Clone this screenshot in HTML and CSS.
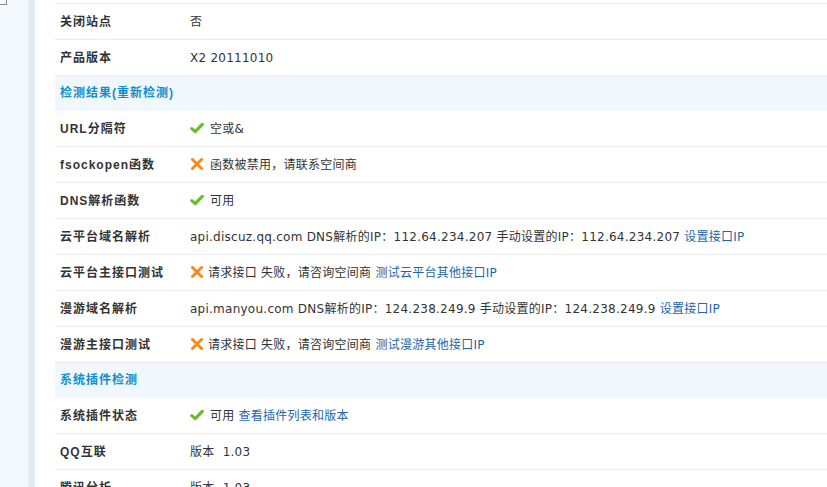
FILE: index.html
```html
<!DOCTYPE html>
<html lang="zh-CN">
<head>
<meta charset="utf-8">
<title>检测结果</title>
<link rel="stylesheet" href="styles.css">
</head>
<body>
<div class="frame">
  <aside class="side"><span class="tree-corner"></span></aside>
  <div class="side-edge"></div>
  <main class="main">
    <div class="cut"></div>
    <div class="row"><div class="label">关闭站点</div><div class="value">否</div></div>
    <div class="row"><div class="label">产品版本</div><div class="value">X2 20111010</div></div>
    <div class="row head"><div class="label">检测结果(重新检测)</div></div>
    <div class="row"><div class="label">URL分隔符</div><div class="value"><svg class="ico" viewBox="0 0 14 12"><path class="ok" d="M1.8 6.6 L5.2 9.6 L12.3 2.4"/></svg>空或&amp;</div></div>
    <div class="row"><div class="label">fsockopen函数</div><div class="value"><svg class="ico" viewBox="0 0 14 12"><path class="no" d="M2.5 1.5 L11.5 10.5 M11.5 1.5 L2.5 10.5"/></svg>函数被禁用，请联系空间商</div></div>
    <div class="row"><div class="label">DNS解析函数</div><div class="value"><svg class="ico" viewBox="0 0 14 12"><path class="ok" d="M1.8 6.6 L5.2 9.6 L12.3 2.4"/></svg>可用</div></div>
    <div class="row"><div class="label">云平台域名解析</div><div class="value">api.discuz.qq.com DNS解析的IP：112.64.234.207 手动设置的IP：112.64.234.207 <a href="#">设置接口IP</a></div></div>
    <div class="row"><div class="label">云平台主接口测试</div><div class="value"><svg class="ico tight" viewBox="0 0 14 12"><path class="no" d="M2.5 1.5 L11.5 10.5 M11.5 1.5 L2.5 10.5"/></svg>请求接口 失败，请咨询空间商 <a href="#">测试云平台其他接口IP</a></div></div>
    <div class="row"><div class="label">漫游域名解析</div><div class="value">api.manyou.com DNS解析的IP：124.238.249.9 手动设置的IP：124.238.249.9 <a href="#">设置接口IP</a></div></div>
    <div class="row"><div class="label">漫游主接口测试</div><div class="value"><svg class="ico tight" viewBox="0 0 14 12"><path class="no" d="M2.5 1.5 L11.5 10.5 M11.5 1.5 L2.5 10.5"/></svg>请求接口 失败，请咨询空间商 <a href="#">测试漫游其他接口IP</a></div></div>
    <div class="row head"><div class="label">系统插件检测</div></div>
    <div class="row"><div class="label">系统插件状态</div><div class="value"><svg class="ico" viewBox="0 0 14 12"><path class="ok" d="M1.8 6.6 L5.2 9.6 L12.3 2.4"/></svg>可用 <a href="#">查看插件列表和版本</a></div></div>
    <div class="row"><div class="label">QQ互联</div><div class="value">版本&nbsp; 1.03</div></div>
    <div class="row"><div class="label">腾讯分析</div><div class="value">版本&nbsp; 1.03</div></div>
  </main>
</div>
</body>
</html>
```
FILE: styles.css
```css
html, body {
  margin: 0;
  padding: 0;
  height: 100%;
  overflow: hidden;
  background: #fff;
}
.frame {
  display: flex;
  height: 100%;
  font-family: "DejaVu Sans", "Noto Sans CJK SC", sans-serif;
  font-size: 12px;
  color: #333;
}
.side {
  width: 28px;
  flex: none;
  background: #f3f9fd;
  position: relative;
}
.tree-corner {
  position: absolute;
  left: 0;
  top: 0;
  width: 6px;
  height: 4px;
  border-right: 1px solid #8a8a8a;
  border-bottom: 1px solid #8a8a8a;
}
.side-edge {
  width: 7px;
  flex: none;
  background: linear-gradient(to right, #e6f0f8, #d9e8f4 70%, #eaf2f9);
}
.main {
  flex: 1;
  padding-left: 20px;
  min-width: 0;
}
.cut {
  height: 3px;
  border-bottom: 1px solid #ededed;
}
.row {
  display: grid;
  grid-template-columns: 130px 1fr;
  align-items: center;
  height: 35px;
  border-bottom: 1px solid #ededed;
  white-space: nowrap;
}
.label {
  padding-left: 5px;
  font-family: "Liberation Sans", "Noto Sans CJK SC", sans-serif;
  font-weight: bold;
  letter-spacing: 1px;
  color: #333;
  line-height: 16px;
}
.value {
  padding-left: 5px;
  line-height: 16px;
  letter-spacing: 0.25px;
  color: #333;
}
.value a {
  color: #2366a8;
  text-decoration: none;
}
.head {
  height: 34px;
  background: #f0f7fd;
  border-bottom: 1px solid #f6fafd;
}
.head .label {
  color: #0d8fcc;
  grid-column: 1 / 3;
}
.ico {
  display: inline-block;
  width: 14px;
  height: 12px;
  margin-right: 6px;
  vertical-align: -1px;
}
.ico.tight {
  margin-right: 4px;
}
.ok {
  fill: none;
  stroke: #69bd2b;
  stroke-width: 3.2;
  stroke-linecap: round;
  stroke-linejoin: round;
}
.no {
  fill: none;
  stroke: #f68a1c;
  stroke-width: 3;
  stroke-linecap: round;
}
```
